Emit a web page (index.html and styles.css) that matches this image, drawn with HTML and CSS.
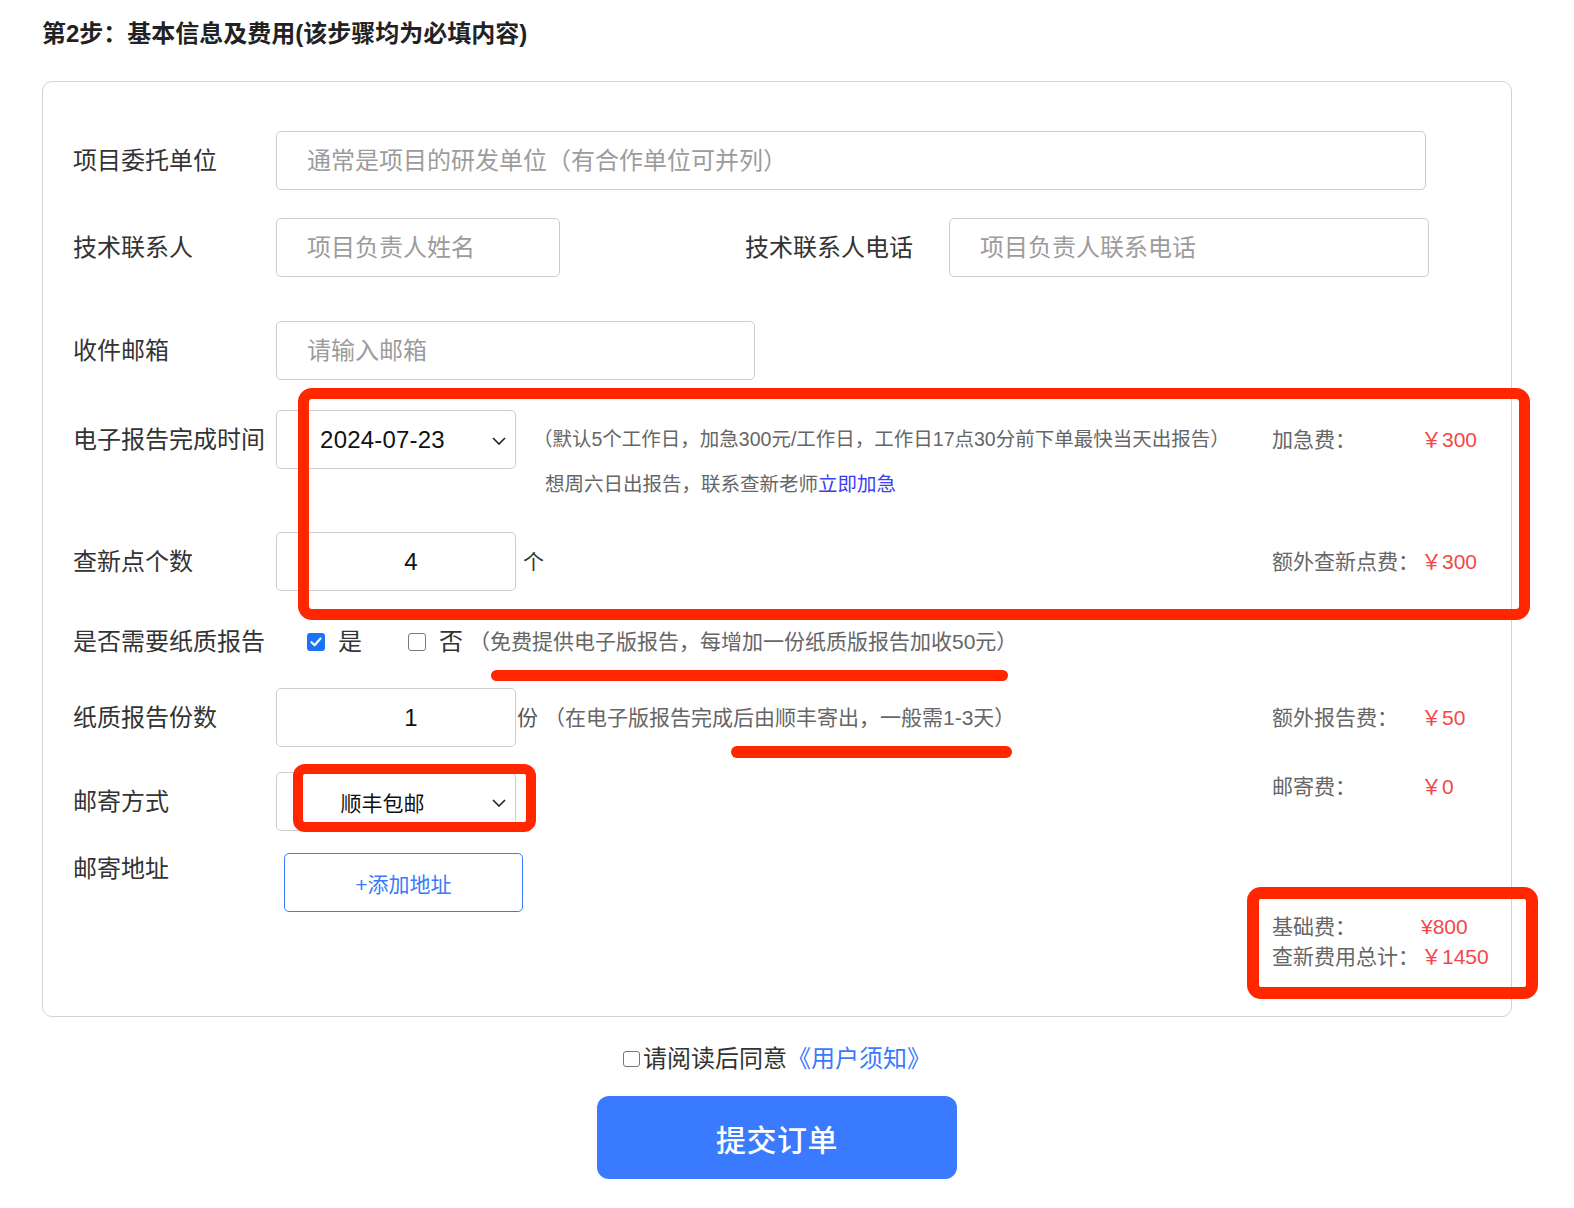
FILE: index.html
```html
<!DOCTYPE html>
<html lang="zh-CN">
<head>
<meta charset="utf-8">
<title>第2步：基本信息及费用</title>
<link rel="stylesheet" href="styles.css">
</head>
<body>
<div class="page">
  <h2 class="title">第2步：基本信息及费用(该步骤均为必填内容)</h2>

  <div class="card">
    <div class="row r1">
      <div class="label">项目委托单位</div>
      <input class="field w-full" type="text" placeholder="通常是项目的研发单位（有合作单位可并列）">
    </div>

    <div class="row r2">
      <div class="label">技术联系人</div>
      <input class="field w-name" type="text" placeholder="项目负责人姓名">
      <div class="label label2">技术联系人电话</div>
      <input class="field w-phone" type="text" placeholder="项目负责人联系电话">
    </div>

    <div class="row r3">
      <div class="label">收件邮箱</div>
      <input class="field w-mail" type="text" placeholder="请输入邮箱">
    </div>

    <div class="row r4">
      <div class="label">电子报告完成时间</div>
      <div class="select">
        <span class="sel-text date">2024-07-23</span>
        <svg class="chev" width="14" height="8" viewBox="0 0 14 8"><path d="M1 1 L7 7 L13 1" fill="none" stroke="#222" stroke-width="1.6"/></svg>
      </div>
      <div class="note-block">
        <div class="note1">（默认5个工作日，加急300元/工作日，工作日17点30分前下单最快当天出报告）</div>
        <div class="note2">想周六日出报告，联系查新老师<a class="urgent" href="#">立即加急</a></div>
      </div>
      <div class="fee tall"><span class="fee-label">加急费：</span><span class="fee-val">￥300</span></div>
    </div>

    <div class="row r5">
      <div class="label">查新点个数</div>
      <input class="field num" type="text" value="4">
      <span class="unit unit-ge">个</span>
      <div class="fee tall"><span class="fee-label">额外查新点费：</span><span class="fee-val">￥300</span></div>
    </div>

    <div class="row r6">
      <div class="label short">是否需要纸质报告</div>
      <span class="cb on"><svg width="12" height="10" viewBox="0 0 12 10"><path d="M1.5 5.2 L4.6 8.2 L10.5 1.5" fill="none" stroke="#fff" stroke-width="2.2" stroke-linecap="round" stroke-linejoin="round"/></svg></span>
      <span class="opt opt-yes">是</span>
      <span class="cb off"></span>
      <span class="opt opt-no">否</span>
      <span class="note note-paper">（免费提供电子版报告，每增加一份纸质版报告加收50元）</span>
    </div>

    <div class="row r7">
      <div class="label">纸质报告份数</div>
      <input class="field num" type="text" value="1">
      <span class="unit unit-fen">份</span>
      <span class="note note-ship">（在电子版报告完成后由顺丰寄出，一般需1-3天）</span>
      <div class="fee tall"><span class="fee-label">额外报告费：</span><span class="fee-val">￥50</span></div>
    </div>

    <div class="row r8">
      <div class="label">邮寄方式</div>
      <div class="select">
        <span class="sel-text">顺丰包邮</span>
        <svg class="chev" width="14" height="8" viewBox="0 0 14 8"><path d="M1 1 L7 7 L13 1" fill="none" stroke="#222" stroke-width="1.6"/></svg>
      </div>
      <div class="fee"><span class="fee-label">邮寄费：</span><span class="fee-val">￥0</span></div>
    </div>

    <div class="row r9">
      <div class="label addr-label">邮寄地址</div>
      <button class="add-btn" type="button">+添加地址</button>
    </div>

    <div class="summary">
      <div class="fee"><span class="fee-label">基础费：</span><span class="fee-val">¥800</span></div>
      <div class="fee"><span class="fee-label">查新费用总计：</span><span class="fee-val">￥1450</span></div>
    </div>
  </div>

  <div class="agree">
    <span class="agree-cb"></span><span>请阅读后同意</span><a class="notice" href="#">《用户须知》</a>
  </div>

  <div class="submit-wrap">
    <button class="submit" type="button">提交订单</button>
  </div>

  <div class="mark mark-1"></div>
  <div class="mark mark-2"></div>
  <div class="mark mark-3"></div>
  <div class="stroke stroke-1"></div>
  <div class="stroke stroke-2"></div>
</div>
</body>
</html>
```

FILE: styles.css
```css
* { box-sizing: border-box; }

html, body {
  margin: 0;
  padding: 0;
  background: #fff;
}

body {
  font-family: "Liberation Sans", "Noto Sans CJK SC", sans-serif;
  color: #333;
}

.page {
  position: relative;
  width: 1574px;
  height: 1208px;
  padding-left: 42px;
  overflow: hidden;
}

.title {
  margin: 0;
  height: 81px;
  padding-top: 19px;
  font-size: 24px;
  line-height: 30px;
  font-weight: 700;
  color: #222;
}

.card {
  width: 1470px;
  border: 1px solid #d2d2d2;
  border-radius: 10px;
  padding: 49px 28px 44px 30px;
}

.row {
  display: flex;
  align-items: flex-start;
}

.r2 { margin-top: 28px; }
.r3 { margin-top: 44px; }
.r4 { margin-top: 30px; }
.r5 { margin-top: 33px; }
.r6 { margin-top: 36px; line-height: 30px; }
.r7 { margin-top: 31px; }
.r8 { margin-top: 25px; }
.r9 { margin-top: 22px; }

.label {
  flex: none;
  width: 203px;
  font-size: 24px;
  line-height: 59px;
  color: #333;
  white-space: nowrap;
}

.label.short { line-height: 30px; }
.label.addr-label { line-height: 32px; }

.label2 {
  width: 204px;
  margin-left: 185px;
}

.field {
  flex: none;
  height: 59px;
  border: 1px solid #cdcdcd;
  border-radius: 5px;
  background: #fff;
  font-family: inherit;
  font-size: 24px;
  color: #111;
  padding: 0 0 0 30px;
  outline: none;
}

.field::placeholder { color: #9c9c9c; }

.w-full { width: 1150px; }
.w-name { width: 284px; }
.w-phone { width: 480px; }
.w-mail { width: 479px; }

.field.num {
  width: 240px;
  text-align: center;
}

.select {
  position: relative;
  flex: none;
  width: 240px;
  height: 59px;
  border: 1px solid #cdcdcd;
  border-radius: 5px;
  background: #fff;
  display: flex;
  align-items: center;
  justify-content: center;
  padding-right: 27px;
}

.sel-text {
  font-size: 21px;
  color: #111;
  white-space: nowrap;
}

.sel-text.date { font-size: 24px; letter-spacing: 0.2px; }

.chev {
  position: absolute;
  right: 9px;
  top: 26px;
}

.note-block {
  flex: none;
  margin-left: 17px;
  color: #666;
  font-size: 19.5px;
  white-space: nowrap;
}

.note1 { line-height: 59px; }

.note2 {
  line-height: 30px;
  padding-left: 12px;
}

.urgent {
  color: #3a3ff0;
  text-decoration: none;
}

.note {
  flex: none;
  color: #666;
  font-size: 21px;
  white-space: nowrap;
}

.note-paper { margin-left: 6px; }

.note-ship {
  margin-left: 6px;
  line-height: 59px;
}

.unit {
  flex: none;
  font-size: 21px;
  line-height: 59px;
  color: #333;
}

.unit-ge { margin-left: 7px; }
.unit-fen { margin-left: 1px; color: #555; }

.fee {
  flex: none;
  width: 211px;
  margin-left: auto;
  display: flex;
  font-size: 21px;
  line-height: 30px;
  white-space: nowrap;
}

.fee.tall { line-height: 59px; }

.fee-label {
  flex: none;
  width: 149px;
  color: #666;
}

.fee-val { color: #f4474a; }

.cb {
  flex: none;
  width: 18px;
  height: 18px;
  margin-top: 6px;
  border-radius: 3px;
}

.cb.on {
  margin-left: 31px;
  background: #1b74f5;
  display: flex;
  align-items: center;
  justify-content: center;
}

.cb.off {
  margin-left: 46px;
  border: 1.5px solid #7a7a7a;
  background: #fff;
}

.opt {
  flex: none;
  font-size: 24px;
  color: #333;
}

.opt-yes { margin-left: 13px; }
.opt-no { margin-left: 13px; }

.add-btn {
  flex: none;
  margin-left: 8px;
  width: 239px;
  height: 59px;
  border: 1px solid #3a7afe;
  border-radius: 5px;
  background: #fff;
  color: #3a7afe;
  font-family: inherit;
  font-size: 21px;
  padding: 0;
  cursor: pointer;
}

.summary {
  display: flex;
  flex-direction: column;
  align-items: flex-end;
}

.agree {
  width: 1470px;
  margin-top: 27px;
  display: flex;
  justify-content: center;
  align-items: center;
  font-size: 24px;
  line-height: 30px;
  color: #333;
}

.agree-cb {
  width: 17px;
  height: 16px;
  border: 1.5px solid #777;
  border-radius: 3px;
  margin-right: 3px;
}

.notice {
  color: #3a7afe;
  text-decoration: none;
}

.submit-wrap {
  width: 1470px;
  margin-top: 22px;
  display: flex;
  justify-content: center;
}

.submit {
  width: 360px;
  height: 83px;
  border: none;
  border-radius: 12px;
  background: #3a7afe;
  color: #fff;
  font-family: inherit;
  font-size: 30px;
  font-weight: 500;
  letter-spacing: 0.5px;
  cursor: pointer;
}

/* red annotation overlays */
.mark {
  position: absolute;
  border: 11px solid #ff2600;
  pointer-events: none;
}

.mark-1 {
  left: 298px;
  top: 388px;
  width: 1232px;
  height: 232px;
  border-radius: 14px;
}

.mark-2 {
  left: 293px;
  top: 764px;
  width: 243px;
  height: 68px;
  border-width: 10px;
  border-radius: 12px;
}

.mark-3 {
  left: 1247px;
  top: 887px;
  width: 291px;
  height: 112px;
  border-width: 12px;
  border-radius: 14px;
}

.stroke {
  position: absolute;
  background: #ff2600;
  border-radius: 6px;
  pointer-events: none;
}

.stroke-1 {
  left: 491px;
  top: 670px;
  width: 517px;
  height: 11px;
}

.stroke-2 {
  left: 731px;
  top: 746px;
  width: 281px;
  height: 12px;
}
```
